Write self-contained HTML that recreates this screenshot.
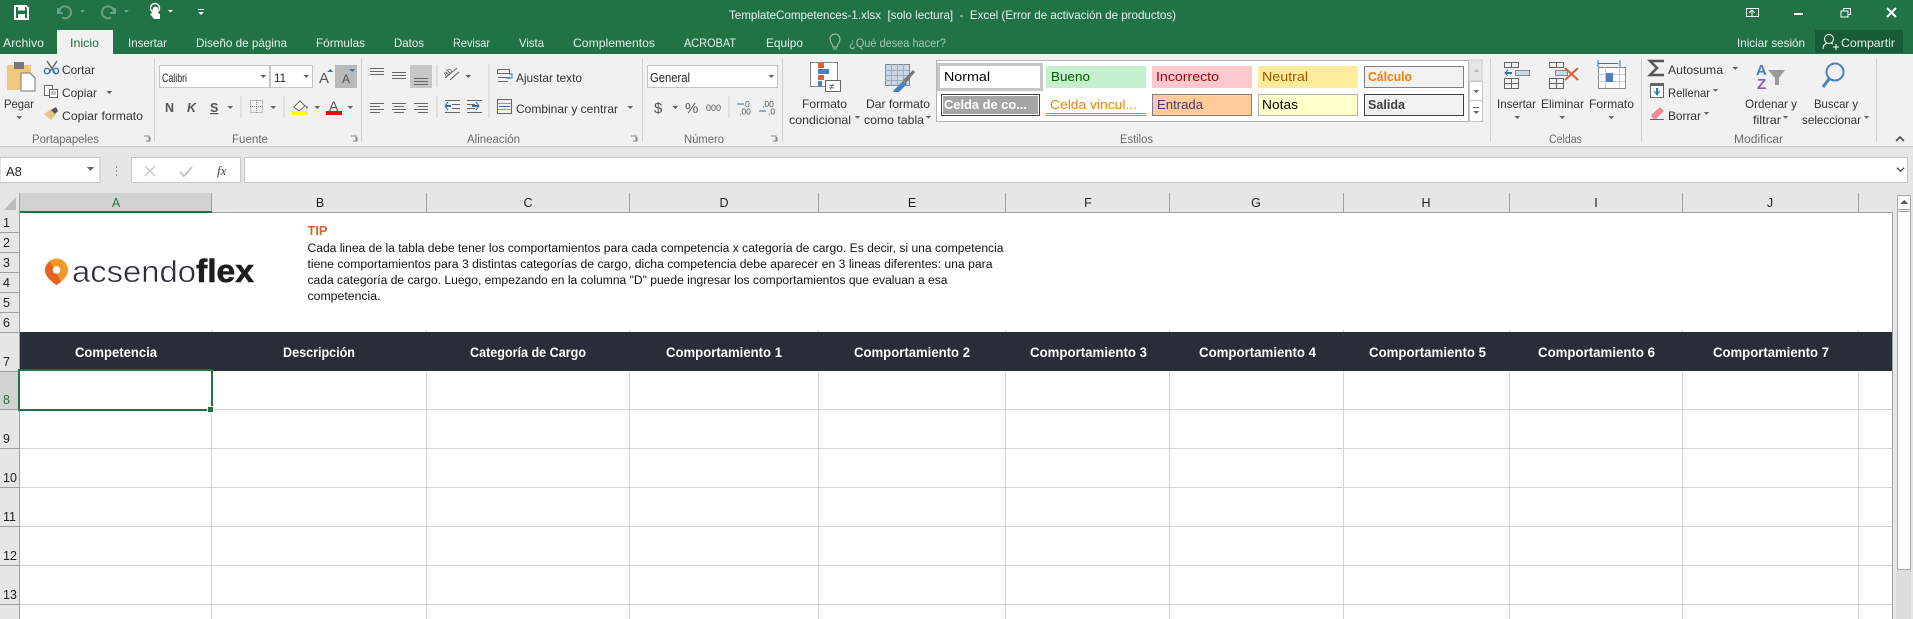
<!DOCTYPE html>
<html lang="es"><head><meta charset="utf-8"><title>TemplateCompetences-1.xlsx</title>
<style>
html,body{margin:0;padding:0;background:#e6e6e6;overflow:hidden}
svg{display:block}
text{font-family:"Liberation Sans",sans-serif;font-size:12px;fill:#444}
.w{fill:#fff}.t{fill:#e8f1ec}
.l{fill:#6a6a6a;font-size:11.5px}
.s{font-size:12px;fill:#333}
.h{font-size:12.5px;fill:#222}
.c{font-size:13.5px;font-weight:bold;fill:#fff}
.b{font-size:11.5px;fill:#111}
.n{font-size:12.5px;fill:#222}
.st{font-size:12.5px}
.ln{stroke:#555;stroke-width:1;fill:none}
.g{stroke:#d4d4d4;stroke-width:1}
.k{stroke:#a0a0a0;stroke-width:1}
.sep{stroke:#d0d0d0;stroke-width:1}
</style></head><body>
<svg xmlns="http://www.w3.org/2000/svg" width="1913" height="619" viewBox="0 0 1913 619" shape-rendering="crispEdges">
<!-- base bars -->
<rect width="1913" height="54" fill="#217346"/>
<rect x="57" y="30" width="56" height="24" fill="#f1f1f1"/>
<rect y="54" width="1913" height="92" fill="#f1f1f1"/>
<rect y="146" width="1913" height="1" fill="#c6c6c6"/>
<rect y="147" width="1913" height="46" fill="#e6e6e6"/>
<rect y="193" width="1913" height="426" fill="#e6e6e6"/>

<!-- quick access -->
<g shape-rendering="auto">
<path d="M15 6h11l2 2v11H15z" fill="none" stroke="#fff" stroke-width="2"/><rect x="18" y="6" width="7" height="4.500" fill="#fff"/><rect x="18" y="14" width="7" height="5" fill="#fff"/>
<path d="M59 12a6 6 0 1 1 3 5.500M58 8v5h5" fill="none" stroke="#66a283" stroke-width="2"/>
<path d="M80 10h5l-2.500 3z" fill="#66a283"/>
<path d="M114 12a6 6 0 1 0-3 5.500M115 8v5h-5" fill="none" stroke="#66a283" stroke-width="2"/>
<path d="M124 10h5l-2.500 3z" fill="#66a283"/>
<path d="M153 8a3 3 0 0 1 5 0v5l2 1v5h-6l-4-5 2-1z" fill="#fff"/><circle cx="155" cy="8" r="4.500" fill="none" stroke="#fff" stroke-width="1.500"/>
<path d="M168 10h5l-2.500 2.500z" fill="#fff"/>
<rect x="198" y="9" width="6" height="1" fill="#fff"/><path d="M198 12h6l-3 3z" fill="#fff"/>
</g>

<!-- title -->
<text class="t" x="729" y="19" textLength="447" lengthAdjust="spacingAndGlyphs" xml:space="preserve">TemplateCompetences-1.xlsx  [solo lectura]  -  Excel (Error de activación de productos)</text>

<!-- window controls -->
<rect x="1746.500" y="8.500" width="12" height="8" fill="none" stroke="#fff"/><path d="M1749 13l3-3 3 3M1752 10v6" stroke="#fff" fill="none"/>
<rect x="1794" y="13" width="9" height="2" fill="#fff"/>
<rect x="1843.500" y="8.500" width="7" height="6" fill="none" stroke="#fff"/><rect x="1841" y="11" width="7" height="6" fill="#217346" stroke="#fff"/>
<path d="M1887 8l9 9M1896 8l-9 9" stroke="#fff" stroke-width="2" shape-rendering="auto"/>

<!-- tabs -->
<text class="t" x="3" y="47" textLength="41" lengthAdjust="spacingAndGlyphs">Archivo</text>
<text x="70" y="47" textLength="29" lengthAdjust="spacingAndGlyphs" style="fill:#217346">Inicio</text>
<text class="t" x="128" y="47" textLength="39" lengthAdjust="spacingAndGlyphs">Insertar</text>
<text class="t" x="196" y="47" textLength="91" lengthAdjust="spacingAndGlyphs">Diseño de página</text>
<text class="t" x="316" y="47" textLength="49" lengthAdjust="spacingAndGlyphs">Fórmulas</text>
<text class="t" x="394" y="47" textLength="30" lengthAdjust="spacingAndGlyphs">Datos</text>
<text class="t" x="453" y="47" textLength="37" lengthAdjust="spacingAndGlyphs">Revisar</text>
<text class="t" x="519" y="47" textLength="25" lengthAdjust="spacingAndGlyphs">Vista</text>
<text class="t" x="573" y="47" textLength="82" lengthAdjust="spacingAndGlyphs">Complementos</text>
<text class="t" x="684" y="47" textLength="52" lengthAdjust="spacingAndGlyphs">ACROBAT</text>
<text class="t" x="766" y="47" textLength="37" lengthAdjust="spacingAndGlyphs">Equipo</text>
<g shape-rendering="auto"><path d="M833 47c0-3-3-4-3-8a5 5 0 0 1 10 0c0 4-3 5-3 8z" fill="none" stroke="#a6c7b5"/><path d="M833 49h4" stroke="#a6c7b5"/></g>
<text x="849" y="47" textLength="97" lengthAdjust="spacingAndGlyphs" style="fill:#a6c7b5">¿Qué desea hacer?</text>
<text class="t" x="1737" y="47" textLength="68" lengthAdjust="spacingAndGlyphs">Iniciar sesión</text>
<rect x="1815" y="30" width="88" height="23" fill="#185c37"/>
<g shape-rendering="auto"><circle cx="1829" cy="39" r="4.500" fill="none" stroke="#fff"/><path d="M1823 49c0-4 2-5 4-6M1831 43l2 1M1833 47h6M1836 44v6" fill="none" stroke="#fff"/></g>
<text class="t" x="1841" y="47" textLength="54" lengthAdjust="spacingAndGlyphs">Compartir</text>

<!-- group separators -->
<g class="sep"><path d="M154.500 58V142M361.500 58V142M642.500 58V142M782.500 58V142M1490.500 58V142M1641.500 58V142M1876.500 58V142"/></g>

<!-- Portapapeles -->
<rect x="7" y="65" width="24" height="25" fill="#f0c77e"/><rect x="14" y="62" width="10" height="7" fill="#777"/>
<path d="M21 73h9l5 5v13H21z" fill="#fff" stroke="#777"/>
<text class="s" x="4" y="108" textLength="30" lengthAdjust="spacingAndGlyphs">Pegar</text>
<path d="M16 116h6l-3 3z" fill="#666"/>
<g shape-rendering="auto"><path d="M47 61l8 12M57 61l-8 12" stroke="#666" stroke-width="1.500"/><circle cx="47" cy="71" r="2.700" fill="none" stroke="#2e75b6" stroke-width="1.300"/><circle cx="56" cy="71" r="2.700" fill="none" stroke="#2e75b6" stroke-width="1.300"/></g>
<text class="s" x="62" y="74" textLength="33" lengthAdjust="spacingAndGlyphs">Cortar</text>
<rect x="44.500" y="85.500" width="8" height="10" fill="#fff" stroke="#666"/><rect x="49.500" y="89.500" width="8" height="8" fill="#fff" stroke="#666"/><path d="M51 92h5M51 94h5" stroke="#888"/>
<text class="s" x="62" y="97" textLength="35" lengthAdjust="spacingAndGlyphs">Copiar</text>
<path d="M106 91h6l-3 3z" fill="#666"/>
<g shape-rendering="auto"><path d="M44 114l7-5 5 5-5 6z" fill="#e8c483"/><path d="M51 110l5-3 2 4-3 3z" fill="#555"/></g>
<text class="s" x="62" y="120" textLength="81" lengthAdjust="spacingAndGlyphs">Copiar formato</text>
<text class="l" x="32" y="143" textLength="67" lengthAdjust="spacingAndGlyphs">Portapapeles</text>
<path d="M144 136h5v5M146 141h4v-4" fill="none" stroke="#888"/>

<!-- Fuente -->
<rect x="159.500" y="65.500" width="110" height="22" fill="#fff" stroke="#c6c6c6"/>
<rect x="270.500" y="65.500" width="42" height="22" fill="#fff" stroke="#c6c6c6"/>
<text x="162" y="82" textLength="25" lengthAdjust="spacingAndGlyphs" style="font-size:12px;fill:#222">Calibri</text>
<path d="M260 75h6l-3 3z" fill="#666"/>
<text x="274" y="82" textLength="12" lengthAdjust="spacingAndGlyphs" style="font-size:12px;fill:#222">11</text>
<path d="M303 75h6l-3 3z" fill="#666"/>
<text x="319" y="83" style="font-size:15px;fill:#555">A</text><path d="M327 72h6l-3-3z" fill="#2e75b6"/>
<rect x="335" y="65" width="22" height="23" fill="#b9b9b9"/>
<text x="342" y="83" style="font-size:12px;fill:#555">A</text><path d="M349 69h6l-3 3z" fill="#2e75b6"/>
<text x="165" y="112" style="font-size:12.500px;font-weight:bold;fill:#555">N</text>
<text x="187" y="112" style="font-size:12.500px;font-weight:bold;font-style:italic;fill:#555">K</text>
<text x="210" y="112" style="font-size:12.500px;font-weight:bold;text-decoration:underline;fill:#555">S</text>
<path d="M227 106h6l-3 3z" fill="#666"/>
<path d="M241 96v22" class="sep"/>
<rect x="250.500" y="100.500" width="12" height="12" fill="none" stroke="#888" stroke-dasharray="1 1"/><path d="M256.500 100v13M250 106.500h13" stroke="#888" stroke-dasharray="1 1"/>
<path d="M270 106h6l-3 3z" fill="#666"/>
<path d="M284 96v22" class="sep"/>
<g shape-rendering="auto"><path d="M294 107l6-6 5 5-6 5z" fill="#fff" stroke="#666"/><path d="M305 105l3 2-1 2z" fill="#2e75b6"/></g>
<rect x="292" y="111" width="16" height="4" fill="#ff0"/>
<path d="M314 106h6l-3 3z" fill="#666"/>
<text x="329" y="111" style="font-size:14px;fill:#555">A</text><rect x="326" y="111" width="16" height="4" fill="#f00"/>
<path d="M347 106h6l-3 3z" fill="#666"/>
<text class="l" x="232" y="143" textLength="36" lengthAdjust="spacingAndGlyphs">Fuente</text>
<path d="M351 136h5v5M353 141h4v-4" fill="none" stroke="#888"/>

<!-- Alineación -->
<g stroke="#666"><path d="M370 68.500h14M370 71.500h14M370 74.500h14"/><path d="M392 72.500h14M392 75.500h14M392 78.500h14"/></g>
<rect x="410" y="65" width="22" height="23" fill="#c6c6c6"/>
<g stroke="#666"><path d="M414 78.500h14M414 81.500h14M414 84.500h14"/></g>
<path d="M437 65v22" class="sep"/>
<g shape-rendering="auto"><path d="M445 78l12-10M450 80l9-8" stroke="#666"/><text x="446" y="77" transform="rotate(-40 446 77)" style="font-size:8px;fill:#555">ab</text></g>
<path d="M465 75h6l-3 3z" fill="#666"/>
<g stroke="#666"><path d="M370 103.500h14M370 106.500h10M370 109.500h14M370 112.500h10"/><path d="M392 103.500h14M394 106.500h10M392 109.500h14M394 112.500h10"/><path d="M414 103.500h14M418 106.500h10M414 109.500h14M418 112.500h10"/></g>
<path d="M437 96v22" class="sep"/>
<g stroke="#666"><path d="M445 100.500h15M452 104.500h8M452 108.500h8M445 112.500h15"/><path d="M467 100.500h15M467 104.500h8M467 108.500h8M467 112.500h15"/></g>
<path d="M445 106h6M472 106h7" stroke="#2e75b6" stroke-width="2"/><path d="M448 102l-3 4 3 4M476 102l3 4-3 4" fill="none" stroke="#2e75b6"/>
<path d="M489 64v54" class="sep"/>
<rect x="497.500" y="69.500" width="12" height="4" fill="none" stroke="#666"/><path d="M498 77.500h12M498 81.500h10" stroke="#666"/><path d="M509 74h3v4h-6" fill="none" stroke="#2e75b6"/>
<text class="s" x="516" y="82" textLength="66" lengthAdjust="spacingAndGlyphs">Ajustar texto</text>
<rect x="497.500" y="99.500" width="14" height="14" fill="none" stroke="#666"/><path d="M498 103.500h13M498 109.500h13" stroke="#999"/><path d="M499 106.500h11" stroke="#2e75b6"/>
<text class="s" x="516" y="113" textLength="102" lengthAdjust="spacingAndGlyphs">Combinar y centrar</text>
<path d="M627 106h6l-3 3z" fill="#666"/>
<text class="l" x="467" y="143" textLength="53" lengthAdjust="spacingAndGlyphs">Alineación</text>
<path d="M631 136h5v5M633 141h4v-4" fill="none" stroke="#888"/>

<!-- Número -->
<rect x="647.500" y="65.500" width="130" height="22" fill="#fff" stroke="#c6c6c6"/>
<text class="h" x="650" y="82" textLength="40" lengthAdjust="spacingAndGlyphs">General</text>
<path d="M768 75h6l-3 3z" fill="#666"/>
<text x="654" y="113" style="font-size:15px;fill:#555">$</text>
<path d="M672 106h6l-3 3z" fill="#666"/>
<text x="685" y="113" style="font-size:15px;fill:#555">%</text>
<text x="706" y="111" textLength="15" lengthAdjust="spacingAndGlyphs" style="font-size:9px;fill:#555">000</text>
<path d="M729 96v22" class="sep"/>
<text x="745" y="107" style="font-size:8.500px;fill:#555">0</text><text x="739" y="114.500" style="font-size:8.500px;fill:#555">,00</text><path d="M737 104h7" stroke="#2e75b6"/>
<text x="762" y="107" style="font-size:8.500px;fill:#555">,00</text><text x="768" y="114.500" style="font-size:8.500px;fill:#555">,0</text><path d="M759 111h7" stroke="#2e75b6"/>
<text class="l" x="684" y="143" textLength="40" lengthAdjust="spacingAndGlyphs">Número</text>
<path d="M771 136h5v5M773 141h4v-4" fill="none" stroke="#888"/>

<!-- Formato condicional -->
<rect x="810.500" y="62.500" width="27" height="24" fill="#fff" stroke="#888"/>
<rect x="818" y="63" width="6" height="5" fill="#d9603b"/><rect x="818" y="69" width="11" height="5" fill="#4a80bd"/><rect x="818" y="75" width="6" height="5" fill="#d9603b"/><rect x="818" y="81" width="4" height="5" fill="#4a80bd"/>
<rect x="825.500" y="80.500" width="15" height="11" fill="#fff" stroke="#666"/>
<text x="829" y="90" style="font-size:10px;fill:#444">≠</text>
<text class="s" x="802" y="108" textLength="45" lengthAdjust="spacingAndGlyphs">Formato</text>
<text class="s" x="789" y="124" textLength="62" lengthAdjust="spacingAndGlyphs">condicional</text>
<path d="M855 116h5l-2.500 3z" fill="#666"/>
<rect x="885.500" y="64.500" width="24" height="21" fill="#c8d8ea" stroke="#888"/>
<path d="M885 70.500h24M885 75.500h24M885 80.500h24M891.500 64v22M897.500 64v22M903.500 64v22" stroke="#aaa"/>
<g shape-rendering="auto"><path d="M894 90l9-9 4 3-8 8-6 0z" fill="#4a80bd"/><path d="M903 80l10-10 2 2-9 11z" fill="#777"/></g>
<text class="s" x="866" y="108" textLength="64" lengthAdjust="spacingAndGlyphs">Dar formato</text>
<text class="s" x="864" y="124" textLength="60" lengthAdjust="spacingAndGlyphs">como tabla</text>
<path d="M926 116h5l-2.500 3z" fill="#666"/>

<!-- Estilos -->
<rect x="936.500" y="60.500" width="532" height="61" fill="#fff" stroke="#b4b4b4"/>
<rect x="937" y="63" width="106" height="28" fill="#c6c6c6"/><rect x="940" y="66" width="100" height="22" fill="#fff"/>
<text class="st" x="944" y="81" textLength="46" lengthAdjust="spacingAndGlyphs" style="fill:#000">Normal</text>
<rect x="1046" y="66" width="100" height="22" fill="#c6efce"/>
<text class="st" x="1051" y="81" textLength="39" lengthAdjust="spacingAndGlyphs" style="fill:#006100">Bueno</text>
<rect x="1152" y="66" width="100" height="22" fill="#ffc7ce"/>
<text class="st" x="1156" y="81" textLength="63" lengthAdjust="spacingAndGlyphs" style="fill:#9c0006">Incorrecto</text>
<rect x="1258" y="66" width="100" height="22" fill="#ffeb9c"/>
<text class="st" x="1262" y="81" textLength="46" lengthAdjust="spacingAndGlyphs" style="fill:#9c5700">Neutral</text>
<rect x="1364.500" y="66.500" width="99" height="21" fill="#f2f2f2" stroke="#7f7f7f"/>
<text class="st" x="1368" y="81" textLength="44" lengthAdjust="spacingAndGlyphs" style="fill:#fa7d00;font-weight:bold">Cálculo</text>
<rect x="941" y="94" width="99" height="22" fill="#3f3f3f"/><rect x="942" y="95" width="97" height="20" fill="#fff"/><rect x="943" y="96" width="95" height="18" fill="#a5a5a5"/>
<text class="st" x="944" y="109" textLength="83" lengthAdjust="spacingAndGlyphs" style="fill:#fff;font-weight:bold">Celda de co...</text>
<text class="st" x="1050" y="109" textLength="87" lengthAdjust="spacingAndGlyphs" style="fill:#fa7d00">Celda vincul...</text>
<rect x="1046" y="113" width="100" height="1" fill="#fa7d00"/><rect x="1046" y="115" width="100" height="1" fill="#fa7d00"/>
<rect x="1152.500" y="94.500" width="99" height="21" fill="#fc9" stroke="#7f7f7f"/>
<text class="st" x="1157" y="109" textLength="46" lengthAdjust="spacingAndGlyphs" style="fill:#3f3f76">Entrada</text>
<rect x="1258.500" y="94.500" width="99" height="21" fill="#ffc" stroke="#b2b2b2"/>
<text class="st" x="1262" y="109" textLength="36" lengthAdjust="spacingAndGlyphs" style="fill:#000">Notas</text>
<rect x="1364.500" y="94.500" width="99" height="21" fill="#f2f2f2" stroke="#3f3f3f"/>
<text class="st" x="1368" y="109" textLength="37" lengthAdjust="spacingAndGlyphs" style="fill:#3f3f3f;font-weight:bold">Salida</text>
<rect x="1469" y="60" width="13" height="21" fill="#e6e6e6" stroke="#d0d0d0"/><path d="M1473 72h6l-3-3z" fill="#bbb"/>
<rect x="1469.500" y="81.500" width="13" height="19" fill="#fff" stroke="#c6c6c6"/><path d="M1473 90h6l-3 3z" fill="#666"/>
<rect x="1469.500" y="100.500" width="13" height="21" fill="#fff" stroke="#c6c6c6"/><path d="M1473 107.500h6" stroke="#666"/><path d="M1473 111h6l-3 3z" fill="#666"/>
<text class="l" x="1120" y="143" textLength="33" lengthAdjust="spacingAndGlyphs">Estilos</text>

<!-- Celdas -->
<g fill="none" stroke="#666"><rect x="1504.500" y="62.500" width="14" height="5"/><rect x="1504.500" y="78.500" width="14" height="10"/><path d="M1511.500 62v5M1504 83.500h14M1511.500 78v10"/>
<rect x="1549.500" y="62.500" width="14" height="5"/><rect x="1549.500" y="78.500" width="14" height="10"/><path d="M1556.500 62v5M1549 83.500h14M1556.500 78v10"/></g>
<rect x="1515.500" y="70.500" width="14" height="5" fill="#c8d8ea" stroke="#888"/>
<path d="M1505 73h7" stroke="#2e75b6" stroke-width="2"/><path d="M1508 70l-3 3 3 3" fill="none" stroke="#2e75b6"/>
<rect x="1555.500" y="70.500" width="12" height="5" fill="#c8d8ea" stroke="#888"/>
<path d="M1565 68l13 12M1578 68l-13 12" stroke="#d9603b" stroke-width="2" shape-rendering="auto"/>
<path d="M1598 63.500h20" stroke="#2e75b6"/><path d="M1598 60v7M1620 60v7" stroke="#2e75b6"/>
<rect x="1598.500" y="67.500" width="27" height="21" fill="#fff" stroke="#888"/><path d="M1598 74.500h27M1598 81.500h27M1605.500 67v21M1619.500 67v21" stroke="#ccc"/>
<rect x="1606" y="73" width="7" height="9" fill="#4a80bd"/>
<text class="s" x="1497" y="108" textLength="39" lengthAdjust="spacingAndGlyphs">Insertar</text>
<path d="M1514 116h6l-3 3z" fill="#666"/>
<text class="s" x="1541" y="108" textLength="43" lengthAdjust="spacingAndGlyphs">Eliminar</text>
<path d="M1559 116h6l-3 3z" fill="#666"/>
<text class="s" x="1589" y="108" textLength="45" lengthAdjust="spacingAndGlyphs">Formato</text>
<path d="M1608 116h6l-3 3z" fill="#666"/>
<text class="l" x="1549" y="143" textLength="33" lengthAdjust="spacingAndGlyphs">Celdas</text>

<!-- Modificar -->
<path d="M1664 61h-14l7 7-7 7h14" fill="none" stroke="#555" stroke-width="2.500" shape-rendering="auto"/>
<text class="s" x="1668" y="74" textLength="55" lengthAdjust="spacingAndGlyphs">Autosuma</text>
<path d="M1732 67h6l-3 3z" fill="#666"/>
<rect x="1650.500" y="83.500" width="13" height="14" fill="#fff" stroke="#666"/><rect x="1650" y="83" width="14" height="3" fill="#666"/><path d="M1657 88v6" stroke="#2e75b6" stroke-width="2"/><path d="M1654 91l3 4 3-4" fill="none" stroke="#2e75b6"/>
<text class="s" x="1668" y="97" textLength="42" lengthAdjust="spacingAndGlyphs">Rellenar</text>
<path d="M1713 89h5l-2.500 3z" fill="#666"/>
<g shape-rendering="auto"><path d="M1651 115l9-8 4 4-8 8h-3z" fill="#ee8e9c"/><path d="M1650 119.500h14" stroke="#666"/></g>
<text class="s" x="1668" y="120" textLength="33" lengthAdjust="spacingAndGlyphs">Borrar</text>
<path d="M1704 112h5l-2.500 3z" fill="#666"/>
<text x="1756" y="75" style="font-size:15px;font-weight:bold;fill:#4a80bd">A</text>
<text x="1757" y="89" style="font-size:15px;font-weight:bold;fill:#8e5bb5">Z</text>
<path d="M1768 70h17l-6 8v7h-4v-7z" fill="#999"/>
<text class="s" x="1745" y="108" textLength="52" lengthAdjust="spacingAndGlyphs">Ordenar y</text>
<text class="s" x="1753" y="124" textLength="28" lengthAdjust="spacingAndGlyphs">filtrar</text>
<path d="M1783 116h5l-2.500 3z" fill="#666"/>
<g shape-rendering="auto"><circle cx="1835" cy="72" r="8.500" fill="none" stroke="#4a80bd" stroke-width="2"/><path d="M1829 79l-6 8" stroke="#4a80bd" stroke-width="3"/></g>
<text class="s" x="1814" y="108" textLength="44" lengthAdjust="spacingAndGlyphs">Buscar y</text>
<text class="s" x="1802" y="124" textLength="59" lengthAdjust="spacingAndGlyphs">seleccionar</text>
<path d="M1864 116h5l-2.500 3z" fill="#666"/>
<text class="l" x="1734" y="143" textLength="49" lengthAdjust="spacingAndGlyphs">Modificar</text>
<path d="M1896 141l4-4 4 4" fill="none" stroke="#555" stroke-width="1.500"/>

<!-- formula bar -->
<rect x="0" y="157.500" width="100" height="25" fill="#fff" stroke="#c6c6c6"/>
<text x="6" y="176" style="font-size:13px;fill:#222">A8</text>
<path d="M87 167h7l-3.500 4z" fill="#666"/>
<path d="M116 167h1M116 171h1M116 175h1" stroke="#999" stroke-width="2"/>
<rect x="131.500" y="157.500" width="109" height="25" fill="#fff" stroke="#c6c6c6"/>
<g shape-rendering="auto"><path d="M145 166l10 10M155 166l-10 10" stroke="#c8c8c8" stroke-width="1.500"/><path d="M180 172l4 4 8-9" fill="none" stroke="#c8c8c8" stroke-width="2"/></g>
<text x="217" y="175" style="font-family:'Liberation Serif',serif;font-size:13px;font-style:italic;fill:#444">fx</text>
<rect x="244.500" y="157.500" width="1663" height="25" fill="#fff" stroke="#c6c6c6"/>
<path d="M1897 168l3.500 3 3.500-3" fill="none" stroke="#555" stroke-width="1.500"/>

<!-- sheet -->
<rect x="20" y="213" width="1872" height="406" fill="#fff"/>
<!-- row grid -->
<g class="g"><path d="M20 409.500H1892M20 448.500H1892M20 487.500H1892M20 526.500H1892M20 565.500H1892M20 604.500H1892"/>
<path d="M211.500 371V619M426.500 371V619M629.500 371V619M818.500 371V619M1005.500 371V619M1169.500 371V619M1343.500 371V619M1509.500 371V619M1682.500 371V619M1858.500 371V619"/>
<path d="M211.500 330V332M426.500 330V332M629.500 330V332M818.500 330V332M1005.500 330V332M1169.500 330V332M1343.500 330V332M1509.500 330V332M1682.500 330V332M1858.500 330V332"/></g>
<rect x="1892" y="213" width="1" height="406" fill="#a0a0a0"/>

<!-- column headers -->
<rect x="20" y="193" width="191" height="19" fill="#d2d2d2"/>
<path d="M16 197v13H4z" fill="#bdbdbd" shape-rendering="auto"/>
<g class="k"><path d="M19.500 193V212M211.500 193V212M426.500 193V212M629.500 193V212M818.500 193V212M1005.500 193V212M1169.500 193V212M1343.500 193V212M1509.500 193V212M1682.500 193V212M1858.500 193V212"/>
<path d="M211 212.500H1893"/></g>
<rect x="20" y="211" width="192" height="2" fill="#217346"/>
<g text-anchor="middle">
<text class="h" x="116" y="207" style="fill:#217346">A</text>
<text class="h" x="320" y="207">B</text>
<text class="h" x="528" y="207">C</text>
<text class="h" x="724" y="207">D</text>
<text class="h" x="912" y="207">E</text>
<text class="h" x="1088" y="207">F</text>
<text class="h" x="1256" y="207">G</text>
<text class="h" x="1426" y="207">H</text>
<text class="h" x="1596" y="207">I</text>
<text class="h" x="1770" y="207">J</text>
</g>

<!-- row headers -->
<rect x="0" y="371" width="19" height="39" fill="#d2d2d2"/>
<rect x="19" y="193" width="1" height="426" fill="#a0a0a0"/>
<g class="k"><path d="M0 232.500H19M0 252.500H19M0 272.500H19M0 292.500H19M0 312.500H19M0 332.500H19M0 371.500H19M0 409.500H19M0 448.500H19M0 487.500H19M0 526.500H19M0 565.500H19M0 604.500H19"/></g>
<g>
<text class="n" x="3" y="227">1</text><text class="n" x="3" y="247">2</text><text class="n" x="3" y="267">3</text>
<text class="n" x="3" y="287">4</text><text class="n" x="3" y="307">5</text><text class="n" x="3" y="327">6</text>
<text class="n" x="3" y="366">7</text><text class="n" x="3" y="404" style="fill:#217346">8</text>
<text class="n" x="3" y="443">9</text><text class="n" x="3" y="482">10</text><text class="n" x="3" y="521">11</text>
<text class="n" x="3" y="560">12</text><text class="n" x="3" y="599">13</text>
</g>

<!-- logo -->
<g shape-rendering="auto">
<path d="M56.500 258.500a11.500 11.500 0 0 1 11.500 11.500c0 6-6 11.500-11.500 15-5.500-3.500-11.500-9-11.500-15a11.500 11.500 0 0 1 11.500-11.500z" fill="#ef9a2b"/>
<path d="M45 270c0 6 6 11.500 11.500 15 1.500-1 3-2 4.500-3.500L50 262a11.500 11.500 0 0 0-5 8z" fill="#e9611f"/>
<circle cx="56.500" cy="270" r="3.800" fill="#fff"/>
</g>
<text x="72" y="282" textLength="124" lengthAdjust="spacingAndGlyphs" style="font-size:31px;fill:#2b2f38;stroke:#fff;stroke-width:.5px">acsendo</text>
<text x="196" y="282" textLength="58" lengthAdjust="spacingAndGlyphs" style="font-size:32px;font-weight:bold;fill:#1e1e1e;stroke:#1e1e1e;stroke-width:.6px">flex</text>

<!-- tip -->
<text x="307.500" y="235" textLength="20" lengthAdjust="spacingAndGlyphs" style="font-size:13px;font-weight:bold;fill:#e4602c">TIP</text>
<text class="b" x="307.500" y="252" textLength="696" lengthAdjust="spacingAndGlyphs">Cada linea de la tabla debe tener los comportamientos para cada competencia x categoría de cargo. Es decir, si una competencia</text>
<text class="b" x="307.500" y="268" textLength="685" lengthAdjust="spacingAndGlyphs">tiene comportamientos para 3 distintas categorías de cargo, dicha competencia debe aparecer en 3 lineas diferentes: una para</text>
<text class="b" x="307.500" y="284" textLength="640" lengthAdjust="spacingAndGlyphs">cada categoría de cargo. Luego, empezando en la columna "D" puede ingresar los comportamientos que evaluan a esa</text>
<text class="b" x="307.500" y="300" textLength="73" lengthAdjust="spacingAndGlyphs">competencia.</text>

<!-- dark header -->
<rect x="20" y="332" width="1872" height="39" fill="#292d38"/>
<text class="c" x="75" y="357" textLength="82" lengthAdjust="spacingAndGlyphs">Competencia</text>
<text class="c" x="283" y="357" textLength="72" lengthAdjust="spacingAndGlyphs">Descripción</text>
<text class="c" x="470" y="357" textLength="116" lengthAdjust="spacingAndGlyphs">Categoría de Cargo</text>
<text class="c" x="666" y="357" textLength="116" lengthAdjust="spacingAndGlyphs">Comportamiento 1</text>
<text class="c" x="854" y="357" textLength="116" lengthAdjust="spacingAndGlyphs">Comportamiento 2</text>
<text class="c" x="1030" y="357" textLength="117" lengthAdjust="spacingAndGlyphs">Comportamiento 3</text>
<text class="c" x="1199" y="357" textLength="117" lengthAdjust="spacingAndGlyphs">Comportamiento 4</text>
<text class="c" x="1369" y="357" textLength="117" lengthAdjust="spacingAndGlyphs">Comportamiento 5</text>
<text class="c" x="1538" y="357" textLength="117" lengthAdjust="spacingAndGlyphs">Comportamiento 6</text>
<text class="c" x="1713" y="357" textLength="116" lengthAdjust="spacingAndGlyphs">Comportamiento 7</text>

<!-- selection -->
<rect x="19" y="370" width="193" height="40" fill="none" stroke="#217346" stroke-width="2"/>
<rect x="207" y="406" width="7" height="7" fill="#fff"/><rect x="208" y="407" width="5" height="5" fill="#217346"/>

<!-- scrollbar -->
<rect x="1893" y="193" width="20" height="426" fill="#e6e6e6"/>
<rect x="1896" y="570" width="15" height="49" fill="#dcdcdc"/>
<rect x="1897.500" y="195.500" width="13" height="14" fill="#fff" stroke="#aaa"/>
<path d="M1900 204h8l-4-4z" fill="#555"/>
<rect x="1897.500" y="211.500" width="13" height="358" fill="#fff" stroke="#aaa"/>
</svg>
</body></html>
